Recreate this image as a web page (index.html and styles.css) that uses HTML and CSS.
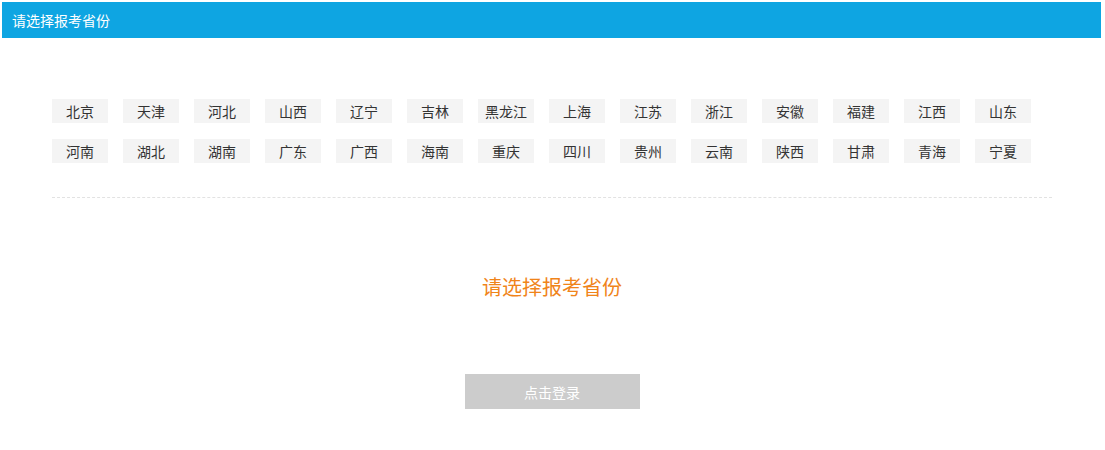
FILE: index.html
```html
<!DOCTYPE html>
<html lang="zh-CN">
<head>
<meta charset="utf-8">
<title>请选择报考省份</title>
<link rel="stylesheet" href="styles.css">
</head>
<body>
<div class="page">
  <div class="header">请选择报考省份</div>
  <div class="content">
    <ul class="provinces">
      <li>北京</li><li>天津</li><li>河北</li><li>山西</li><li>辽宁</li><li>吉林</li><li>黑龙江</li><li>上海</li><li>江苏</li><li>浙江</li><li>安徽</li><li>福建</li><li>江西</li><li>山东</li>
      <li>河南</li><li>湖北</li><li>湖南</li><li>广东</li><li>广西</li><li>海南</li><li>重庆</li><li>四川</li><li>贵州</li><li>云南</li><li>陕西</li><li>甘肃</li><li>青海</li><li>宁夏</li>
    </ul>
    <div class="divider"></div>
    <div class="message">请选择报考省份</div>
    <div class="actions"><button class="login" type="button">点击登录</button></div>
  </div>
</div>
</body>
</html>
```

FILE: styles.css
```css
* { box-sizing: border-box; }
html, body { margin: 0; padding: 0; background: #fff; }
body {
  font-family: "Microsoft YaHei", "Noto Sans CJK SC", "Noto Sans", sans-serif;
  color: #333;
}
.page {
  width: 1099px;
  margin: 2px 0 0 2px;
}
.header {
  height: 36px;
  line-height: 36px;
  background: #0ea5e2;
  color: #fff;
  font-size: 14px;
  padding-left: 10px;
}
.content {
  width: 1000px;
  margin-left: 50px;
}
.provinces {
  list-style: none;
  margin: 61px 0 0 0;
  padding: 0;
  display: grid;
  grid-template-columns: repeat(14, 56px);
  column-gap: 15px;
  row-gap: 16px;
}
.provinces li {
  height: 24px;
  line-height: 24px;
  background: #f4f4f4;
  text-align: center;
  font-size: 14px;
  color: #333;
  cursor: pointer;
}
.divider {
  margin-top: 34px;
  border-top: 1px dashed #e2e2e2;
}
.message {
  margin-top: 74px;
  height: 30px;
  line-height: 30px;
  text-align: center;
  font-size: 20px;
  color: #f0841a;
}
.actions {
  margin-top: 72px;
  display: flex;
  justify-content: center;
}
.login {
  width: 175px;
  height: 35px;
  border: 0;
  background: #cccccc;
  color: #fff;
  font-family: inherit;
  font-size: 14px;
  padding: 0;
}
```
